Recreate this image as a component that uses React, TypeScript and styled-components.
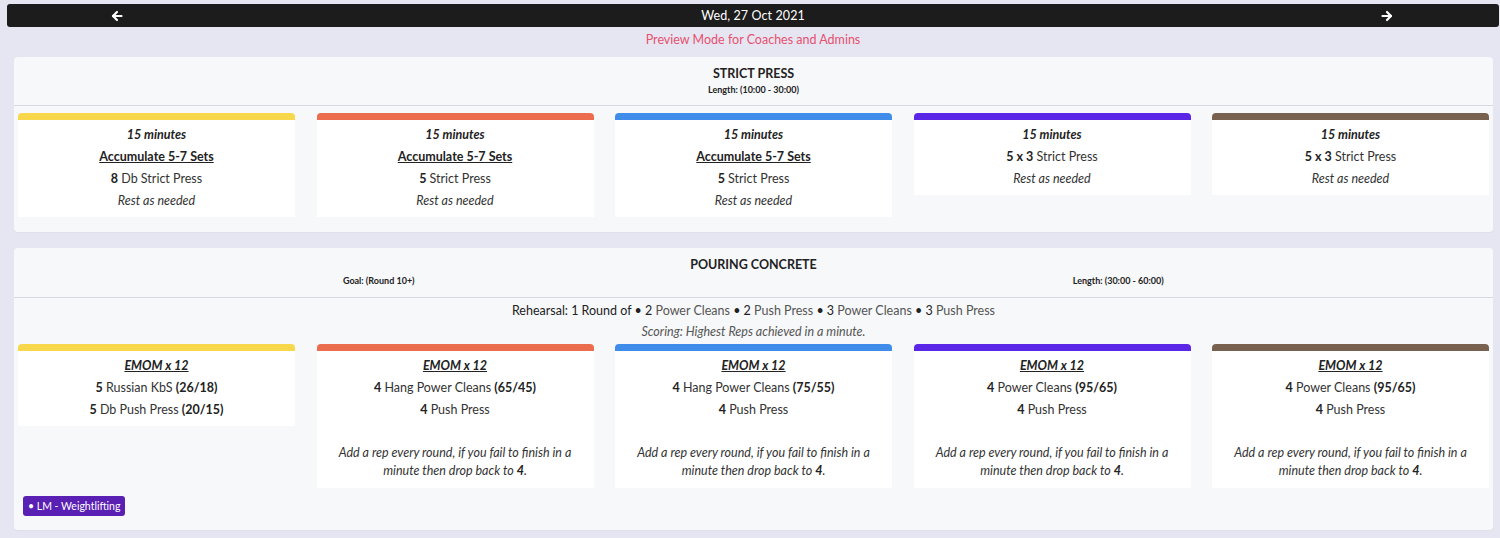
import React from "react";
import styled, { createGlobalStyle } from "styled-components";

const Global = createGlobalStyle`
  html, body { margin: 0; padding: 0; background: #e5e6f2; }
  body { font-family: Lato, "Noto Sans", sans-serif; color: #222; }
  * { box-sizing: border-box; }
`;

const Page = styled.div`
  padding: 4px 1px 8px 7px;
  display: flex;
  flex-direction: column;
`;

const TopBar = styled.div`
  height: 23px;
  background: #1c1c1c;
  border-radius: 3px;
  display: grid;
  grid-template-columns: 1fr auto 1fr;
  align-items: center;
  color: #fff;
  font-size: 12.5px;
`;

const ArrowBtn = styled.div<{ $side: "left" | "right" }>`
  display: flex;
  justify-content: ${(p) => (p.$side === "left" ? "flex-start" : "flex-end")};
  padding: ${(p) => (p.$side === "left" ? "0 0 0 104px" : "0 106px 0 0")};
  svg { display: block; }
`;

const DateText = styled.div`
  letter-spacing: 0.1px;
`;

const Preview = styled.div`
  text-align: center;
  color: #e8506f;
  font-size: 12.5px;
  line-height: 16px;
  margin: 5px 0 9px;
`;

const Panel = styled.section<{ $mt?: number }>`
  margin: ${(p) => p.$mt ?? 0}px 6px 0 7px;
  background: #f7f8fa;
  border-radius: 4px;
  padding: 0 4px;
  box-shadow: 0 1px 1px rgba(0, 0, 0, 0.03);
`;

const PanelHead = styled.div`
  border-bottom: 1px solid #d9dae6;
  margin: 0 -4px;
  padding: 9px 0 7px;
  text-align: center;
`;

const Title = styled.div`
  font-weight: 700;
  font-size: 12.5px;
  line-height: 16px;
  color: #222;
`;

const Sub = styled.div`
  font-weight: 700;
  font-size: 9px;
  line-height: 16px;
  color: #222;
`;

const SubRow = styled.div`
  display: grid;
  grid-template-columns: 1fr 1fr;
  padding-bottom: 1px;
  & > div { padding-right: 10px; }
`;

const Intro = styled.div`
  text-align: center;
  font-size: 12.5px;
  line-height: 21px;
  padding-top: 2px;
`;

const Light = styled.span`
  color: #555;
`;

const Scoring = styled.div`
  font-style: italic;
  color: #555;
`;

const Cards = styled.div<{ $mt: number }>`
  display: grid;
  grid-template-columns: repeat(5, 1fr);
  column-gap: 21.5px;
  align-items: start;
  margin-top: ${(p) => p.$mt}px;
  padding-bottom: 15px;
`;

const Card = styled.div<{ $color: string }>`
  background: #fff;
  border-top: 7px solid ${(p) => p.$color};
  border-radius: 4px 4px 0 0;
  text-align: center;
  font-size: 12.5px;
  line-height: 22px;
  padding: 4px 6px 5px;
  color: #333;
`;

const Line = styled.div``;

const Dur = styled.div`
  font-style: italic;
  font-weight: 700;
  color: #222;
`;

const Head = styled.div`
  font-weight: 700;
  text-decoration: underline;
  color: #222;
`;

const EmHead = styled.div`
  font-weight: 700;
  font-style: italic;
  text-decoration: underline;
  color: #222;
`;

const Rest = styled.div`
  font-style: italic;
`;

const Note = styled.div`
  font-style: italic;
  line-height: 18px;
  margin-top: 23px;
  margin-bottom: 3px;
  padding: 0 8px;
`;

const B = styled.b`
  font-weight: 700;
  color: #222;
`;

const BadgeRow = styled.div`
  padding: 0 0 14px 5px;
  margin-top: -9px;
`;

const Badge = styled.span`
  display: inline-block;
  background: #5a1fb3;
  color: #fff;
  font-size: 10.5px;
  line-height: 20px;
  padding: 0 5px 0 5px;
  border-radius: 3px;
`;

const Arrow = ({ dir }: { dir: "left" | "right" }) => (
  <svg width="12" height="12" viewBox="0 0 12 12" fill="none" stroke="#fff" strokeWidth="2.2" strokeLinecap="round" strokeLinejoin="round">
    {dir === "left" ? (
      <>
        <path d="M10.5 6H2" />
        <path d="M6 2L2 6l4 4" />
      </>
    ) : (
      <>
        <path d="M1.5 6H10" />
        <path d="M6 2l4 4-4 4" />
      </>
    )}
  </svg>
);

const colors = ["#f9d74a", "#ec6c4e", "#3f8ceb", "#5b27e6", "#79614f"];

const strict = [
  { acc: true, main: <><B>8</B> Db Strict Press</> },
  { acc: true, main: <><B>5</B> Strict Press</> },
  { acc: true, main: <><B>5</B> Strict Press</> },
  { acc: false, main: <><B>5 x 3</B> Strict Press</> },
  { acc: false, main: <><B>5 x 3</B> Strict Press</> },
];

const pouring = [
  { a: <><B>5</B> Russian KbS <B>(26/18)</B></>, b: <><B>5</B> Db Push Press <B>(20/15)</B></>, note: false },
  { a: <><B>4</B> Hang Power Cleans <B>(65/45)</B></>, b: <><B>4</B> Push Press</>, note: true },
  { a: <><B>4</B> Hang Power Cleans <B>(75/55)</B></>, b: <><B>4</B> Push Press</>, note: true },
  { a: <><B>4</B> Power Cleans <B>(95/65)</B></>, b: <><B>4</B> Push Press</>, note: true },
  { a: <><B>4</B> Power Cleans <B>(95/65)</B></>, b: <><B>4</B> Push Press</>, note: true },
];

export default function App() {
  return (
    <>
      <Global />
      <Page>
        <TopBar>
          <ArrowBtn $side="left"><Arrow dir="left" /></ArrowBtn>
          <DateText>Wed, 27 Oct 2021</DateText>
          <ArrowBtn $side="right"><Arrow dir="right" /></ArrowBtn>
        </TopBar>
        <Preview>Preview Mode for Coaches and Admins</Preview>
        <Panel>
          <PanelHead>
            <Title>STRICT PRESS</Title>
            <Sub>Length: (10:00 - 30:00)</Sub>
          </PanelHead>
          <Cards $mt={7}>
            {strict.map((c, i) => (
              <Card key={i} $color={colors[i]}>
                <Dur>15 minutes</Dur>
                {c.acc && <Head>Accumulate 5-7 Sets</Head>}
                <Line>{c.main}</Line>
                <Rest>Rest as needed</Rest>
              </Card>
            ))}
          </Cards>
        </Panel>
        <Panel $mt={16}>
          <PanelHead>
            <Title>POURING CONCRETE</Title>
            <SubRow>
              <Sub>Goal: (Round 10+)</Sub>
              <Sub>Length: (30:00 - 60:00)</Sub>
            </SubRow>
          </PanelHead>
          <Intro>
            <div>
              Rehearsal: 1 Round of • 2 <Light>Power Cleans</Light> • 2 <Light>Push Press</Light> • 3{" "}
              <Light>Power Cleans</Light> • 3 <Light>Push Press</Light>
            </div>
            <Scoring>Scoring: Highest Reps achieved in a minute.</Scoring>
          </Intro>
          <Cards $mt={2}>
            {pouring.map((c, i) => (
              <Card key={i} $color={colors[i]}>
                <EmHead>EMOM x 12</EmHead>
                <Line>{c.a}</Line>
                <Line>{c.b}</Line>
                {c.note && (
                  <Note>
                    Add a rep every round, if you fail to finish in a minute then drop back to <B>4</B>.
                  </Note>
                )}
              </Card>
            ))}
          </Cards>
          <BadgeRow>
            <Badge>• LM - Weightlifting</Badge>
          </BadgeRow>
        </Panel>
      </Page>
    </>
  );
}
